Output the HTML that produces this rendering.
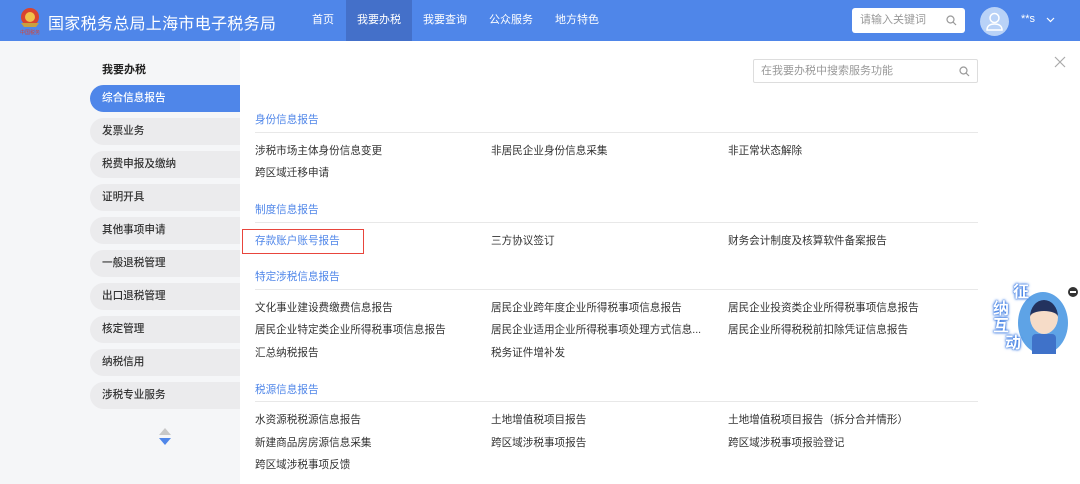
<!DOCTYPE html>
<html><head><meta charset="utf-8"><style>
*{margin:0;padding:0;box-sizing:border-box}
body{width:1080px;height:484px;overflow:hidden;font-family:"Liberation Sans","Noto Sans CJK SC",sans-serif;background:#fff;position:relative;font-size:11px;color:#333}
.hd{position:absolute;left:0;top:0;width:1080px;height:41px;background:#4f86e9}
.logo{position:absolute;left:18px;top:6px;width:24px;height:30px}
.title{position:absolute;left:48px;top:10px;color:#fff;font-size:16px;letter-spacing:0.3px}
.nav{position:absolute;top:0;height:41px;line-height:41px;color:#fff;font-size:11px;text-align:center}
.srch{position:absolute;left:852px;top:8px;width:113px;height:25px;background:#fff;border-radius:3px;color:#999;font-size:11px;line-height:25px;padding-left:8px}
.av{position:absolute;left:980px;top:7px;width:29px;height:29px;border-radius:50%;background:#b9d2f7}
.side{position:absolute;left:0;top:41px;width:240px;height:443px;background:#f5f6f8}
.it{position:absolute;left:90px;width:150px;height:27px;border-radius:14px 0 0 14px;background:#ebebed;line-height:27px;padding-left:12px;font-size:10.6px;color:#333;font-weight:500}
.it.a{background:#4f86e9;color:#fff}
.sec{position:absolute;left:255px;color:#4f86e9;font-size:10.6px}
.ln{position:absolute;left:255px;width:723px;height:1px;background:#e8e8e8}
.t{position:absolute;font-size:10.6px;color:#333;white-space:nowrap}
</style></head><body>
<div class="hd">
<svg class="logo" viewBox="0 0 24 30"><circle cx="12" cy="11" r="9" fill="#d9442f"/><circle cx="12" cy="11" r="5" fill="#f0c24a"/><path d="M3 17h18l-3 4H6z" fill="#c9a040"/><text x="12" y="28" font-size="5" fill="#d9442f" text-anchor="middle">中国税务</text></svg>
<div class="title">国家税务总局上海市电子税务局</div>
<div class="nav" style="left:300px;width:46px">首页</div>
<div class="nav" style="left:346px;width:66px;background:#4470c9">我要办税</div>
<div class="nav" style="left:412px;width:66px">我要查询</div>
<div class="nav" style="left:478px;width:66px">公众服务</div>
<div class="nav" style="left:544px;width:66px">地方特色</div>
<div class="srch">请输入关键词<svg style="position:absolute;right:8px;top:7px" width="11" height="11" viewBox="0 0 11 11"><circle cx="4.5" cy="4.5" r="3.5" fill="none" stroke="#999" stroke-width="1.2"/><path d="M7 7l3 3" stroke="#999" stroke-width="1.2"/></svg></div>
<div class="av"><svg width="29" height="29" viewBox="0 0 29 29"><circle cx="14.5" cy="11" r="4.5" fill="none" stroke="#fff" stroke-width="1.5"/><path d="M7 23c0-4 3-6 7.5-6s7.5 2 7.5 6z" fill="none" stroke="#fff" stroke-width="1.5"/></svg></div>
<div style="position:absolute;left:1021px;top:13px;color:#fff;font-size:11px">**s</div>
<svg style="position:absolute;left:1046px;top:17px" width="9" height="6" viewBox="0 0 9 6"><path d="M1 1l3.5 3.5L8 1" fill="none" stroke="#fff" stroke-width="1.2"/></svg>
</div>
<div class="side">
<div style="position:absolute;left:102px;top:20px;font-weight:bold;font-size:11px;color:#222">我要办税</div>
<div class="it a" style="top:44px">综合信息报告</div>
<div class="it" style="top:77px">发票业务</div>
<div class="it" style="top:110px">税费申报及缴纳</div>
<div class="it" style="top:143px">证明开具</div>
<div class="it" style="top:176px">其他事项申请</div>
<div class="it" style="top:209px">一般退税管理</div>
<div class="it" style="top:242px">出口退税管理</div>
<div class="it" style="top:275px">核定管理</div>
<div class="it" style="top:308px">纳税信用</div>
<div class="it" style="top:341px">涉税专业服务</div>
<svg style="position:absolute;left:157px;top:387px" width="16" height="20" viewBox="0 0 16 20"><path d="M8 0l6 7H2z" fill="#c8c8c8"/><path d="M2 10h12l-6 7z" fill="#4f86e9"/></svg>
</div>
<div style="position:absolute;left:753px;top:59px;width:225px;height:24px;border:1px solid #ddd;border-radius:2px;color:#999;line-height:22px;padding-left:7px">在我要办税中搜索服务功能<svg style="position:absolute;right:7px;top:6px" width="11" height="11" viewBox="0 0 11 11"><circle cx="4.5" cy="4.5" r="3.5" fill="none" stroke="#999" stroke-width="1.2"/><path d="M7 7l3 3" stroke="#999" stroke-width="1.2"/></svg></div>
<svg style="position:absolute;left:1054px;top:56px" width="12" height="12" viewBox="0 0 12 12"><path d="M1 1l10 10M11 1L1 11" stroke="#aaa" stroke-width="1.2"/></svg>

<div class="sec" style="top:112px">身份信息报告</div><div class="ln" style="top:132px"></div>
<div class="t" style="left:255px;top:143px">涉税市场主体身份信息变更</div>
<div class="t" style="left:491px;top:143px">非居民企业身份信息采集</div>
<div class="t" style="left:728px;top:143px">非正常状态解除</div>
<div class="t" style="left:255px;top:165px">跨区域迁移申请</div>

<div class="sec" style="top:202px">制度信息报告</div><div class="ln" style="top:222px"></div>
<div style="position:absolute;left:242px;top:229px;width:122px;height:25px;border:1.5px solid #e8453c"></div>
<div class="t" style="left:255px;top:233px;color:#4f86e9">存款账户账号报告</div>
<div class="t" style="left:491px;top:233px">三方协议签订</div>
<div class="t" style="left:728px;top:233px">财务会计制度及核算软件备案报告</div>

<div class="sec" style="top:269px">特定涉税信息报告</div><div class="ln" style="top:289px"></div>
<div class="t" style="left:255px;top:300px">文化事业建设费缴费信息报告</div>
<div class="t" style="left:491px;top:300px">居民企业跨年度企业所得税事项信息报告</div>
<div class="t" style="left:728px;top:300px">居民企业投资类企业所得税事项信息报告</div>
<div class="t" style="left:255px;top:322px">居民企业特定类企业所得税事项信息报告</div>
<div class="t" style="left:491px;top:322px">居民企业适用企业所得税事项处理方式信息...</div>
<div class="t" style="left:728px;top:322px">居民企业所得税税前扣除凭证信息报告</div>
<div class="t" style="left:255px;top:345px">汇总纳税报告</div>
<div class="t" style="left:491px;top:345px">税务证件增补发</div>

<div class="sec" style="top:382px">税源信息报告</div><div class="ln" style="top:401px"></div>
<div class="t" style="left:255px;top:412px">水资源税税源信息报告</div>
<div class="t" style="left:491px;top:412px">土地增值税项目报告</div>
<div class="t" style="left:728px;top:412px">土地增值税项目报告（拆分合并情形）</div>
<div class="t" style="left:255px;top:435px">新建商品房房源信息采集</div>
<div class="t" style="left:491px;top:435px">跨区域涉税事项报告</div>
<div class="t" style="left:728px;top:435px">跨区域涉税事项报验登记</div>
<div class="t" style="left:255px;top:457px">跨区域涉税事项反馈</div>

<div style="position:absolute;left:1018px;top:292px;width:50px;height:62px;border-radius:50%;background:#5ea3e6"></div>
<div style="position:absolute;left:1030px;top:300px;width:28px;height:34px;border-radius:50%;background:#f6dcc8;border-top:11px solid #23325e"></div>
<div style="position:absolute;left:1032px;top:334px;width:24px;height:20px;background:#3f72c9;border-radius:4px 4px 0 0"></div>
<div style="position:absolute;left:991px;top:284px;color:#fff;font-size:16px;font-weight:bold;line-height:17px;text-shadow:0 0 3px #2a6fe0,0 0 2px #2a6fe0,0 0 1px #2a6fe0">
<div style="margin-left:22px">征</div><div style="margin-left:2px">纳</div><div style="margin-left:2px">互</div><div style="margin-left:14px">动</div></div>
<div style="position:absolute;left:1068px;top:287px;width:10px;height:10px;border-radius:50%;background:#333"><div style="margin:4px 2px;height:2px;background:#fff"></div></div>
</body></html>
